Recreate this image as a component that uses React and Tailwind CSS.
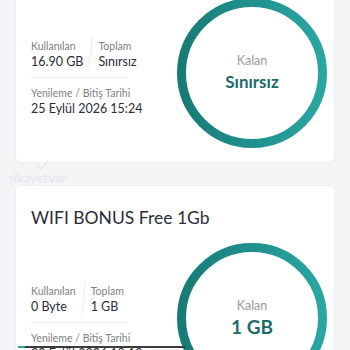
import React from "react";

const packages = [
	{
		title: "Sınırsız Paket",
		used: "16.90 GB",
		total: "Sınırsız",
		date: "25 Eylül 2026 15:24",
		left: "Sınırsız",
		leftSize: "text-[17px]",
	},
	{
		title: "WIFI BONUS Free 1Gb",
		used: "0 Byte",
		total: "1 GB",
		date: "30 Eylül 2026 18:10",
		left: "1 GB",
		leftSize: "text-[19px]",
	},
];

function Ring({ id, label }) {
	return (
		<div className="relative w-[150px] h-[150px] shrink-0">
			<svg width="150" height="150" viewBox="0 0 150 150" className="absolute inset-0">
				<defs>
					<linearGradient id={id} x1="0" y1="0" x2="1" y2="0">
						<stop offset="0%" stopColor="#177b77" />
						<stop offset="100%" stopColor="#2aa6a2" />
					</linearGradient>
				</defs>
				<circle cx="75" cy="75" r="70.5" fill="none" stroke={`url(#${id})`} strokeWidth="9" />
			</svg>
			<div className="absolute inset-0 flex flex-col items-center justify-center">
				<span className="text-[12.5px] leading-[18px] text-[#9b9b9b]">Kalan</span>
				<span className={`${label.size} leading-[24px] font-bold text-[#1d6c6c]`}>{label.text}</span>
			</div>
		</div>
	);
}

function Card({ pkg, idx }) {
	return (
		<div className="bg-white border border-[#eceef1] rounded-md pl-[15px] pr-[7px] pt-[18px] pb-[16px] h-[223px]">
			<div className="text-[17.5px] leading-[28px] text-[#2b2d38] whitespace-nowrap">{pkg.title}</div>
			<div className="flex justify-between items-start mt-[11px]">
				<div className="pt-[40px]">
					<div className="flex">
						<div>
							<div className="text-[10.5px] leading-[16px] text-[#7d7f86]">Kullanılan</div>
							<div className="text-[12.5px] leading-[16px] text-[#2b2d38]">{pkg.used}</div>
						</div>
						<div className="w-px bg-[#eceef0] mx-[7px] rotate-[6deg] -my-[2px]" />
						<div>
							<div className="text-[10.5px] leading-[16px] text-[#7d7f86]">Toplam</div>
							<div className="text-[12.5px] leading-[16px] text-[#2b2d38]">{pkg.total}</div>
						</div>
					</div>
					<div className="w-[97px] h-px bg-[#eeeff1] mt-[7px]" />
					<div className="mt-[7px] text-[10.5px] leading-[16px] text-[#7d7f86] whitespace-nowrap">
						Yenileme / Bitiş Tarihi
					</div>
					<div className="text-[12.5px] leading-[16px] text-[#2b2d38] whitespace-nowrap">{pkg.date}</div>
				</div>
				<Ring id={`ring${idx}`} label={{ text: pkg.left, size: pkg.leftSize }} />
			</div>
		</div>
	);
}

export default function App() {
	return (
		<div
			className="relative w-[350px] h-[350px] overflow-hidden bg-[#f4f5f7] px-[15px]"
			style={{ fontFamily: "Lato, 'Noto Sans', sans-serif" }}
		>
			<div className="flex flex-col gap-[22px] -mt-[60px]">
				{packages.map((pkg, i) => (
					<Card key={i} pkg={pkg} idx={i} />
				))}
			</div>
			{/* watermark */}
			<div className="absolute left-[8px] top-[160px] flex flex-col items-start">
				<svg width="14" height="10" viewBox="0 0 14 10" className="ml-[28px]">
					<path d="M2 6 L5 9 L12 1" fill="none" stroke="#e6e7ea" strokeWidth="1.5" />
				</svg>
				<span className="text-[13.5px] leading-[16px] font-bold text-[#e8e9ec] tracking-tight">şikayetvar</span>
			</div>
			{/* cut line at bottom */}
			<div className="absolute left-[18px] top-[346px] w-[167px] h-[2px] bg-[#3c3c3c]" />
			<div className="absolute left-[18px] top-[346px] w-[7px] h-[2px] bg-[#2aa6a2]" />
		</div>
	);
}
